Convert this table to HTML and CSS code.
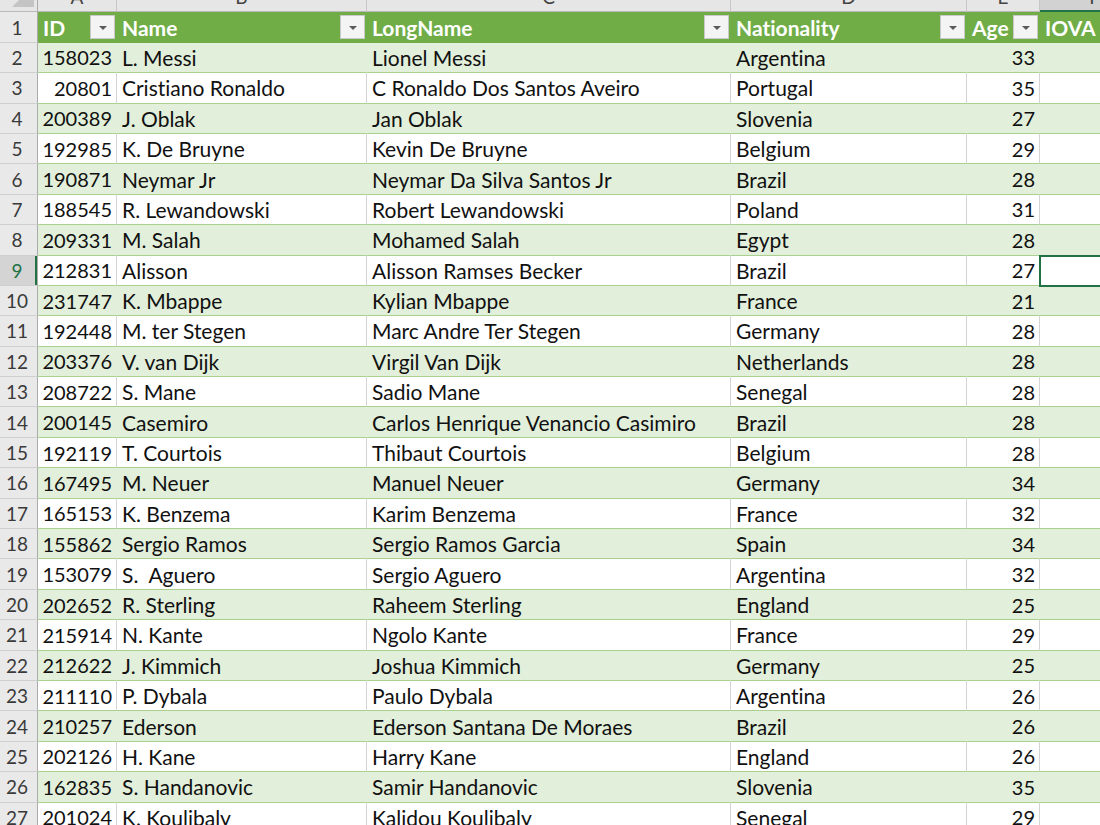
FILE: index.html
```html
<!DOCTYPE html>
<html>
<head>
<meta charset="utf-8">
<link rel="stylesheet" href="styles.css">
</head>
<body>
<div class="sheet">
  <div class="row colhdr">
    <div class="c corner"><span class="tri"></span></div>
    <div class="c lt">A</div>
    <div class="c lt">B</div>
    <div class="c lt">C</div>
    <div class="c lt">D</div>
    <div class="c lt">E</div>
    <div class="c lt sel">F</div>
  </div>
  <div class="row thead">
    <div class="c rh">1</div>
    <div class="c th"><span>ID</span><span class="dd"></span></div>
    <div class="c th"><span>Name</span><span class="dd"></span></div>
    <div class="c th"><span>LongName</span><span class="dd"></span></div>
    <div class="c th"><span>Nationality</span><span class="dd"></span></div>
    <div class="c th"><span>Age</span><span class="dd"></span></div>
    <div class="c th"><span>IOVA</span></div>
  </div>
  <div class="row band"><div class="c rh">2</div><div class="c num">158023</div><div class="c">L. Messi</div><div class="c">Lionel Messi</div><div class="c">Argentina</div><div class="c num">33</div><div class="c"></div></div>
  <div class="row"><div class="c rh">3</div><div class="c num">20801</div><div class="c">Cristiano Ronaldo</div><div class="c">C Ronaldo Dos Santos Aveiro</div><div class="c">Portugal</div><div class="c num">35</div><div class="c"></div></div>
  <div class="row band"><div class="c rh">4</div><div class="c num">200389</div><div class="c">J. Oblak</div><div class="c">Jan Oblak</div><div class="c">Slovenia</div><div class="c num">27</div><div class="c"></div></div>
  <div class="row"><div class="c rh">5</div><div class="c num">192985</div><div class="c">K. De Bruyne</div><div class="c">Kevin De Bruyne</div><div class="c">Belgium</div><div class="c num">29</div><div class="c"></div></div>
  <div class="row band"><div class="c rh">6</div><div class="c num">190871</div><div class="c">Neymar Jr</div><div class="c">Neymar Da Silva Santos Jr</div><div class="c">Brazil</div><div class="c num">28</div><div class="c"></div></div>
  <div class="row"><div class="c rh">7</div><div class="c num">188545</div><div class="c">R. Lewandowski</div><div class="c">Robert Lewandowski</div><div class="c">Poland</div><div class="c num">31</div><div class="c"></div></div>
  <div class="row band"><div class="c rh">8</div><div class="c num">209331</div><div class="c">M. Salah</div><div class="c">Mohamed Salah</div><div class="c">Egypt</div><div class="c num">28</div><div class="c"></div></div>
  <div class="row"><div class="c rh active">9</div><div class="c num">212831</div><div class="c">Alisson</div><div class="c">Alisson Ramses Becker</div><div class="c">Brazil</div><div class="c num">27</div><div class="c cur"></div></div>
  <div class="row band"><div class="c rh">10</div><div class="c num">231747</div><div class="c">K. Mbappe</div><div class="c">Kylian Mbappe</div><div class="c">France</div><div class="c num">21</div><div class="c"></div></div>
  <div class="row"><div class="c rh">11</div><div class="c num">192448</div><div class="c">M. ter Stegen</div><div class="c">Marc Andre Ter Stegen</div><div class="c">Germany</div><div class="c num">28</div><div class="c"></div></div>
  <div class="row band"><div class="c rh">12</div><div class="c num">203376</div><div class="c">V. van Dijk</div><div class="c">Virgil Van Dijk</div><div class="c">Netherlands</div><div class="c num">28</div><div class="c"></div></div>
  <div class="row"><div class="c rh">13</div><div class="c num">208722</div><div class="c">S. Mane</div><div class="c">Sadio Mane</div><div class="c">Senegal</div><div class="c num">28</div><div class="c"></div></div>
  <div class="row band"><div class="c rh">14</div><div class="c num">200145</div><div class="c">Casemiro</div><div class="c">Carlos Henrique Venancio Casimiro</div><div class="c">Brazil</div><div class="c num">28</div><div class="c"></div></div>
  <div class="row"><div class="c rh">15</div><div class="c num">192119</div><div class="c">T. Courtois</div><div class="c">Thibaut Courtois</div><div class="c">Belgium</div><div class="c num">28</div><div class="c"></div></div>
  <div class="row band"><div class="c rh">16</div><div class="c num">167495</div><div class="c">M. Neuer</div><div class="c">Manuel Neuer</div><div class="c">Germany</div><div class="c num">34</div><div class="c"></div></div>
  <div class="row"><div class="c rh">17</div><div class="c num">165153</div><div class="c">K. Benzema</div><div class="c">Karim Benzema</div><div class="c">France</div><div class="c num">32</div><div class="c"></div></div>
  <div class="row band"><div class="c rh">18</div><div class="c num">155862</div><div class="c">Sergio Ramos</div><div class="c">Sergio Ramos Garcia</div><div class="c">Spain</div><div class="c num">34</div><div class="c"></div></div>
  <div class="row"><div class="c rh">19</div><div class="c num">153079</div><div class="c pre">S.  Aguero</div><div class="c">Sergio Aguero</div><div class="c">Argentina</div><div class="c num">32</div><div class="c"></div></div>
  <div class="row band"><div class="c rh">20</div><div class="c num">202652</div><div class="c">R. Sterling</div><div class="c">Raheem Sterling</div><div class="c">England</div><div class="c num">25</div><div class="c"></div></div>
  <div class="row"><div class="c rh">21</div><div class="c num">215914</div><div class="c">N. Kante</div><div class="c">Ngolo Kante</div><div class="c">France</div><div class="c num">29</div><div class="c"></div></div>
  <div class="row band"><div class="c rh">22</div><div class="c num">212622</div><div class="c">J. Kimmich</div><div class="c">Joshua Kimmich</div><div class="c">Germany</div><div class="c num">25</div><div class="c"></div></div>
  <div class="row"><div class="c rh">23</div><div class="c num">211110</div><div class="c">P. Dybala</div><div class="c">Paulo Dybala</div><div class="c">Argentina</div><div class="c num">26</div><div class="c"></div></div>
  <div class="row band"><div class="c rh">24</div><div class="c num">210257</div><div class="c">Ederson</div><div class="c">Ederson Santana De Moraes</div><div class="c">Brazil</div><div class="c num">26</div><div class="c"></div></div>
  <div class="row"><div class="c rh">25</div><div class="c num">202126</div><div class="c">H. Kane</div><div class="c">Harry Kane</div><div class="c">England</div><div class="c num">26</div><div class="c"></div></div>
  <div class="row band"><div class="c rh">26</div><div class="c num">162835</div><div class="c">S. Handanovic</div><div class="c">Samir Handanovic</div><div class="c">Slovenia</div><div class="c num">35</div><div class="c"></div></div>
  <div class="row"><div class="c rh">27</div><div class="c num">201024</div><div class="c">K. Koulibaly</div><div class="c">Kalidou Koulibaly</div><div class="c">Senegal</div><div class="c num">29</div><div class="c"></div></div>
</div>
</body>
</html>
```
FILE: styles.css
```css
html, body {
  margin: 0;
  padding: 0;
  background: #ffffff;
  overflow: hidden;
}
body {
  width: 1100px;
  height: 825px;
  font-family: Lato, "Liberation Sans", sans-serif;
  font-size: 21px;
  font-variant-ligatures: none;
  color: #111;
}
.sheet {
  width: 1150px;
  margin-top: -18px;
}
.row {
  display: grid;
  grid-template-columns: 38px 79px 250px 364px 236px 73px 110px;
  height: 30.4px;
}
.c {
  box-sizing: border-box;
  display: flex;
  align-items: center;
  padding: 0 4px 0 5px;
  white-space: nowrap;
  overflow: hidden;
  border-right: 1px solid #d4d4d4;
  border-bottom: 1px solid #a9d08e;
}
.pre { white-space: pre; }
.num {
  justify-content: flex-end;
  padding-right: 4px;
  font-size: 20px;
}
.band .c { background: #e2efda; border-right-color: transparent; }
.band .c.rh, .c.rh {
  background: #e9e9e9;
  border-right: 1px solid #ababab;
  border-bottom: 1px solid #d0d0d0;
  justify-content: center;
  padding: 0 3px 0 0;
  color: #3a3a3a;
  font-size: 19px;
}
.c.rh.active {
  background: #d4d4d4;
  color: #217346;
  box-shadow: inset -2px 0 0 #217346;
}
.colhdr .c {
  background: #e6e6e6;
  border-right: 1px solid #c6c6c6;
  border-bottom: 1px solid #b9b9b9;
  justify-content: center;
  color: #444;
  font-size: 19px;
  padding: 0;
}
.colhdr .c.sel {
  background: #d2d2d2;
  border-bottom: 2px solid #217346;
}
.colhdr .corner {
  position: relative;
  border-right-color: #ababab;
}
.tri {
  position: absolute;
  right: 3px;
  bottom: 4px;
  width: 0;
  height: 0;
  border-left: 22px solid transparent;
  border-bottom: 22px solid #c4c4c4;
}
.thead .c.th {
  background: #70ad47;
  color: #ffffff;
  font-weight: 700;
  border-right-color: transparent;
  border-bottom-color: #70ad47;
  justify-content: space-between;
  padding: 0 1px 0 5px;
}
.dd {
  box-sizing: border-box;
  width: 25px;
  height: 24px;
  background: #f4f4f4;
  border: 1px solid #c9c9c9;
  display: flex;
  align-items: center;
  justify-content: center;
  flex: none;
}
.dd::after {
  content: "";
  width: 0;
  height: 0;
  margin-top: 2px;
  border-left: 4px solid transparent;
  border-right: 4px solid transparent;
  border-top: 4px solid #5a5a5a;
}
.cur {
  position: relative;
  z-index: 1;
  outline: 2px solid #217346;
  outline-offset: -1px;
}
```
